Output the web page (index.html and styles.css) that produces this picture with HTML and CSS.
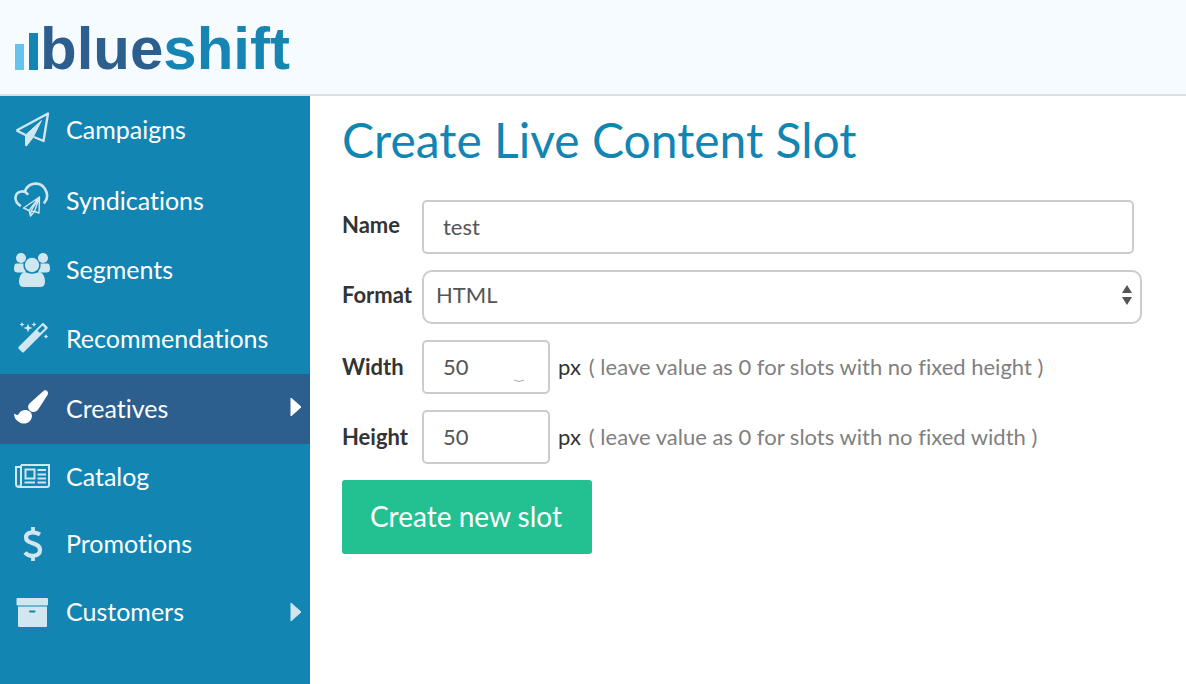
FILE: index.html
```html
<!DOCTYPE html>
<html lang="en">
<head>
<meta charset="utf-8">
<title>Create Live Content Slot</title>
<meta name="viewport" content="width=device-width, initial-scale=1">
<link rel="stylesheet" href="styles.css">
</head>
<body>
<header class="topbar">
  <a class="logo" href="#" aria-label="blueshift">
    <svg class="logo-bars" width="24" height="48" viewBox="0 0 24 48" aria-hidden="true">
      <rect x="0" y="21" width="9" height="26" fill="#66c3ee"/>
      <rect x="14" y="10" width="9" height="37" fill="#1285b3"/>
    </svg>
    <span class="logo-word"><span class="logo-blue">blue</span><span class="logo-shift">shift</span></span>
  </a>
</header>
<div class="shell">
  <nav class="sidebar" aria-label="Main">
    <a class="nav-item" href="#">
      <svg class="icon" viewBox="0 0 36 36" aria-hidden="true">
        <path d="M2.500 18.500 34 1.500 29.500 29 20 25 M11.500 23 2.500 18.500" fill="none" stroke="currentColor" stroke-width="2.400" stroke-linejoin="round"/>
        <path d="M11.500 23 27.500 8.500 19 25.500 12.500 34 11.500 33.500z" fill="currentColor" stroke="currentColor" stroke-linejoin="round"/>
      </svg>
      <span class="nav-text">Campaigns</span>
    </a>
    <a class="nav-item tall" href="#">
      <svg class="icon" viewBox="0 0 36 36" aria-hidden="true">
        <path d="M6 23.500C-.5 19 0 10.500 7.500 9.500 9.500 9 12 10 13.500 12 M11 9C15-.5 27-.5 31 7 34 12 33.500 17 30.500 20.500" fill="none" stroke="currentColor" stroke-width="2.600" stroke-linecap="round"/>
        <path d="M9.500 26 25.500 15 25 31 20.500 29.500 16.500 34 15 28.500zM15 28.500 25.500 15 17 29 16.500 34M17 29 20.500 29.500 25.500 15" fill="none" stroke="currentColor" stroke-width="1.400" stroke-linejoin="round"/>
      </svg>
      <span class="nav-text">Syndications</span>
    </a>
    <a class="nav-item" href="#">
      <svg class="icon" viewBox="0 0 36 36" aria-hidden="true" fill="currentColor">
        <circle cx="7" cy="6" r="5"/><circle cx="29" cy="6" r="5"/><circle cx="18" cy="13" r="7.200"/>
        <path d="M2 11.500 9.500 11.500C9 15 10 17 12 19.500L9 20.500 3 20.500Q0 20 0 17 0 12 2 11.500zM34 11.500 26.500 11.500C27 15 26 17 24 19.500L27 20.500 33 20.500Q36 20 36 17 36 12 34 11.500z"/>
        <path d="M11 20Q18 23.500 25 20C29 20.500 31 25 31 30Q31 35 26 35L10 35Q5 35 5 30C5 25 7 20.500 11 20z"/>
      </svg>
      <span class="nav-text">Segments</span>
    </a>
    <a class="nav-item mid" href="#">
      <svg class="icon raised" viewBox="0 0 36 36" aria-hidden="true" fill="currentColor">
        <path fill-rule="evenodd" d="M4.500 28 28 4.500Q29 3.500 30 4.500L33.500 8Q34 9 33.500 9.500L10 33Q9 34 8 33L4.500 29.500Q4 28.700 4.500 28zM23.500 11.500 26 14 31 9 28.500 6.500z"/>
        <path d="M14 4.500 15.200 7.800 18.500 9 15.200 10.200 14 13.500 12.800 10.200 9.500 9 12.800 7.800zM8 3 8.800 4.700 10.500 5.500 8.800 6.300 8 8 7.200 6.300 5.500 5.500 7.200 4.700zM20 3 20.800 4.700 22.500 5.500 20.800 6.300 20 8 19.200 6.300 17.500 5.500 19.200 4.700zM32 15 32.800 16.700 34.500 17.500 32.800 18.300 32 20 31.200 18.300 29.500 17.500 31.200 16.700z"/>
      </svg>
      <span class="nav-text">Recommendations</span>
    </a>
    <a class="nav-item mid active" href="#" aria-current="page">
      <svg class="icon raised" viewBox="0 0 36 36" aria-hidden="true" fill="currentColor">
        <path d="M30 1.500C33 .5 35 3.500 33.500 6L24.500 20C22 24 16.500 24 14.500 20 13.500 17 14.500 15.500 16 14z"/>
        <path d="M9 21.500C13 20 18 22.500 18 27 17.500 34 10 36.500 5 33 2 31.500 0 28.500 0 24.500 1.500 25.500 3 26.500 4.500 25.500 5.500 23.500 6.500 22 9 21.500z"/>
      </svg>
      <span class="nav-text">Creatives</span>
      <svg class="caret raised" viewBox="0 0 12 20" aria-hidden="true"><path d="M1 1 11 10 1 19z" fill="currentColor" stroke="currentColor" stroke-linejoin="round"/></svg>
    </a>
    <a class="nav-item short" href="#">
      <svg class="icon raised" viewBox="0 0 36 36" aria-hidden="true" fill="none" stroke="currentColor" stroke-width="2">
        <path d="M7 8H35V28Q35 30 33 30H5Q2 30 2 27V10H7M7 8V27Q7 29.500 4.500 29.500"/>
        <rect x="11.500" y="12.500" width="9" height="9"/>
        <path d="M23.500 13H32M23.500 17.500H32M23.500 21.500H32M10.500 25.500H21M23.500 25.500H32"/>
      </svg>
      <span class="nav-text">Catalog</span>
    </a>
    <a class="nav-item" href="#">
      <svg class="icon" viewBox="0 0 36 36" aria-hidden="true" fill="none" stroke="currentColor" stroke-width="3.800">
        <path d="M19 1V6M19 30V35"/>
        <path d="M26 8.500C21 5.500 12 5.500 12 11.500 12 19 26 15.500 26 24 26 31 15 31.500 11 26.500" stroke-width="4.200"/>
      </svg>
      <span class="nav-text">Promotions</span>
    </a>
    <a class="nav-item" href="#">
      <svg class="icon" viewBox="0 0 36 36" aria-hidden="true" fill="currentColor">
        <rect x="2.500" y="4" width="31.500" height="7.500" rx="1"/>
        <path fill-rule="evenodd" d="M4 12.500H33V32Q33 33 32 33H5Q4 33 4 32zM15.500 16.500Q14.500 17.500 15.500 18.500H21Q22 17.500 21 16.500z"/>
      </svg>
      <span class="nav-text">Customers</span>
      <svg class="caret" viewBox="0 0 12 20" aria-hidden="true"><path d="M1 1 11 10 1 19z" fill="currentColor" stroke="currentColor" stroke-linejoin="round"/></svg>
    </a>
  </nav>
  <main class="content">
    <h1 class="title">Create Live Content Slot</h1>
    <form class="slot-form">
      <div class="row row-name">
        <label class="label label-high" for="name">Name</label>
        <input class="field" id="name" type="text" value="test">
      </div>
      <div class="row">
        <label class="label label-high" for="format">Format</label>
        <div class="select-wrap">
          <select class="field select" id="format"><option>HTML</option></select>
          <svg class="select-arrows" viewBox="0 0 10 20" aria-hidden="true"><path d="M5 0 10 8H0zM0 12H10L5 20z" fill="#555"/></svg>
        </div>
      </div>
      <div class="row">
        <label class="label" for="width">Width</label>
        <div class="small-wrap">
          <input class="field" id="width" type="text" inputmode="numeric" value="50">
          <svg class="arc" viewBox="0 0 12 4" aria-hidden="true"><path d="M1 1Q6 4 11 1" fill="none" stroke="#aaa"/></svg>
        </div>
        <span class="unit">px</span>
        <span class="hint">( leave value as 0 for slots with no fixed height )</span>
      </div>
      <div class="row">
        <label class="label" for="height">Height</label>
        <div class="small-wrap">
          <input class="field" id="height" type="text" inputmode="numeric" value="50">
        </div>
        <span class="unit">px</span>
        <span class="hint">( leave value as 0 for slots with no fixed width )</span>
      </div>
      <button class="submit" type="button">Create new slot</button>
    </form>
  </main>
</div>
</body>
</html>
```
FILE: styles.css
```css
* { box-sizing: border-box; }

body {
  margin: 0;
  min-height: 100vh;
  display: flex;
  flex-direction: column;
  background: #fff;
  color: #333;
  font-family: Lato, "Open Sans", sans-serif;
  font-size: 22px;
  font-variant-ligatures: none;
}

.topbar {
  display: flex;
  align-items: center;
  padding: 11px 15px;
  background: #f6fbff;
  border-bottom: 2px solid #dbdfe3;
}

.logo {
  display: flex;
  align-items: center;
  gap: 1px;
  text-decoration: none;
}

.logo-bars { flex: none; }

.logo-word {
  font-family: "Liberation Sans", Arial, sans-serif;
  font-weight: 700;
  font-size: 60px;
  line-height: 68px;
  padding-top: 4px;
}

.logo-blue { color: #2c5f8d; }
.logo-shift { color: #1585b3; }

.shell {
  flex: 1;
  display: flex;
}

.sidebar {
  flex: none;
  width: 310px;
  background: #1285b3;
}

.nav-item {
  display: flex;
  align-items: center;
  gap: 16px;
  min-height: 68px;
  padding: 0 8px 0 14px;
  color: #fff;
  font-size: 25px;
  text-decoration: none;
}

.nav-item.tall { min-height: 72px; }
.nav-item.mid { min-height: 70px; }
.nav-item.short { min-height: 66px; }
.nav-item.active { background: #2c5f8d; }

.nav-text { padding-bottom: 3px; }

.tall .nav-text { padding-bottom: 0; }

.icon {
  flex: none;
  width: 36px;
  height: 36px;
  color: #d0e7f0;
}

.caret {
  width: 12px;
  height: 20px;
  margin-left: auto;
  color: #d0e7f0;
}

.raised { margin-bottom: 4px; }

.active .icon,
.active .caret { color: #fff; }

.content {
  flex: 1;
  min-width: 0;
  padding: 16px 44px 32px 32px;
}

.title {
  margin: 0;
  color: #1285b3;
  font-size: 48px;
  font-weight: 400;
  line-height: 56px;
}

.slot-form {
  display: flex;
  flex-direction: column;
  align-items: stretch;
  gap: 16px;
  margin-top: 32px;
}

.row {
  display: flex;
  align-items: center;
}

.row-name { padding-right: 8px; }

.label {
  flex: none;
  width: 80px;
  padding-bottom: 2px;
  font-weight: 700;
}

.label-high { padding-bottom: 6px; }

.field {
  display: block;
  width: 100%;
  min-width: 0;
  height: 54px;
  padding: 0 19px 2px;
  border: 2px solid #ccc;
  border-radius: 5px;
  background: #fff;
  color: #555;
  font: inherit;
}

.select-wrap {
  position: relative;
  flex: 1;
}

.select {
  appearance: none;
  padding: 0 40px 6px 12px;
  border-radius: 10px;
}

.select-arrows {
  position: absolute;
  top: 15px;
  right: 10px;
  width: 10px;
  height: 20px;
  pointer-events: none;
}

.small-wrap {
  position: relative;
  flex: none;
  width: 128px;
}

.arc {
  position: absolute;
  right: 25px;
  bottom: 11px;
  width: 12px;
  height: 4px;
}

.unit {
  margin: 0 8px;
  padding-bottom: 2px;
}

.hint {
  padding-bottom: 2px;
  color: #808080;
}

.submit {
  align-self: flex-start;
  min-height: 74px;
  padding: 0 30px 2px 28px;
  border: 0;
  border-radius: 3px;
  background: #23c191;
  color: #fff;
  font: inherit;
  font-size: 28px;
}
```
